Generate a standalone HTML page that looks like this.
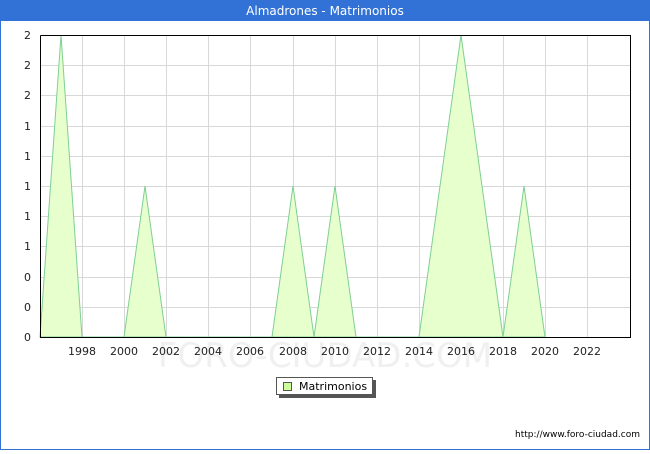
<!DOCTYPE html>
<html><head><meta charset="utf-8"><style>
body{margin:0;width:650px;height:450px;overflow:hidden;font-family:"DejaVu Sans","Liberation Sans",sans-serif;background:#fff}
</style></head><body>
<svg width="650" height="450" xmlns="http://www.w3.org/2000/svg" font-family="DejaVu Sans, Liberation Sans, sans-serif">
<rect x="0.5" y="0.5" width="649" height="449" fill="#fff" stroke="#3272d6"/>
<rect x="0" y="0" width="650" height="21" fill="#3272d6"/>
<text x="325" y="15" font-size="12" fill="#fff" text-anchor="middle">Almadrones - Matrimonios</text>
<text x="325" y="367" font-size="34" fill="#f0f0f0" text-anchor="middle">FORO-CIUDAD.COM</text>
<g stroke="#d8d8d8" stroke-width="1">
<line x1="40" x2="630" y1="65.5" y2="65.5"/><line x1="40" x2="630" y1="95.5" y2="95.5"/><line x1="40" x2="630" y1="126.5" y2="126.5"/><line x1="40" x2="630" y1="156.5" y2="156.5"/><line x1="40" x2="630" y1="186.5" y2="186.5"/><line x1="40" x2="630" y1="216.5" y2="216.5"/><line x1="40" x2="630" y1="246.5" y2="246.5"/><line x1="40" x2="630" y1="277.5" y2="277.5"/><line x1="40" x2="630" y1="307.5" y2="307.5"/>
<line x1="82.5" x2="82.5" y1="35" y2="337"/><line x1="124.5" x2="124.5" y1="35" y2="337"/><line x1="166.5" x2="166.5" y1="35" y2="337"/><line x1="208.5" x2="208.5" y1="35" y2="337"/><line x1="250.5" x2="250.5" y1="35" y2="337"/><line x1="293.5" x2="293.5" y1="35" y2="337"/><line x1="335.5" x2="335.5" y1="35" y2="337"/><line x1="377.5" x2="377.5" y1="35" y2="337"/><line x1="419.5" x2="419.5" y1="35" y2="337"/><line x1="461.5" x2="461.5" y1="35" y2="337"/><line x1="503.5" x2="503.5" y1="35" y2="337"/><line x1="545.5" x2="545.5" y1="35" y2="337"/><line x1="587.5" x2="587.5" y1="35" y2="337"/>
</g>
<polygon fill="#e6ffcc" stroke="#7fcf95" stroke-width="1" points="40,337 61,35 82,337 124,337 145,186 166,337 272,337 293,186 314,337 335,186 356,337 419,337 461,35 503,337 524,186 545,337"/>
<polyline fill="none" stroke="#000" stroke-width="1" points="40.5,35.5 630.5,35.5 630.5,337.5 40.5,337.5 40.5,35.5"/>
<g font-size="11" fill="#222" text-anchor="end">
<text x="31" y="39">2</text><text x="31" y="69">2</text><text x="31" y="99">2</text><text x="31" y="130">1</text><text x="31" y="160">1</text><text x="31" y="190">1</text><text x="31" y="220">1</text><text x="31" y="250">1</text><text x="31" y="281">0</text><text x="31" y="311">0</text><text x="31" y="341">0</text>
</g>
<g font-size="11" fill="#222" text-anchor="middle">
<text x="82" y="355">1998</text><text x="124" y="355">2000</text><text x="166" y="355">2002</text><text x="208" y="355">2004</text><text x="250" y="355">2006</text><text x="293" y="355">2008</text><text x="335" y="355">2010</text><text x="377" y="355">2012</text><text x="419" y="355">2014</text><text x="461" y="355">2016</text><text x="503" y="355">2018</text><text x="545" y="355">2020</text><text x="587" y="355">2022</text>
</g>
<rect x="279" y="380" width="97" height="18" fill="#555"/>
<rect x="276.5" y="377.5" width="96" height="17" fill="#fff" stroke="#555"/>
<rect x="283.5" y="382.5" width="8" height="8" fill="#ccff99" stroke="#555"/>
<text x="299" y="390" font-size="11" fill="#000">Matrimonios</text>
<text x="640" y="437" font-size="9" fill="#000" text-anchor="end">http://www.foro-ciudad.com</text>
</svg>
</body></html>
